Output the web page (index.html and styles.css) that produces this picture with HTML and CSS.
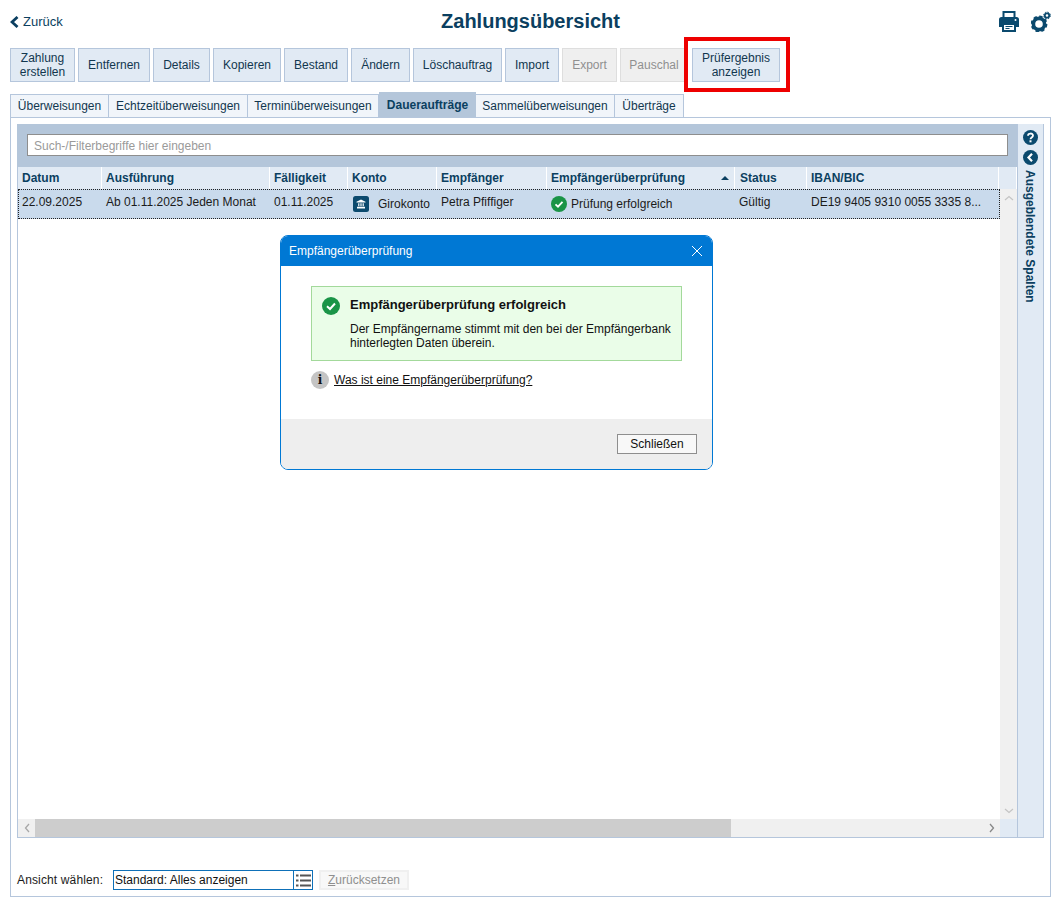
FILE: index.html
```html
<!DOCTYPE html>
<html lang="de">
<head>
  <meta charset="UTF-8" />
  <title>Zahlungsübersicht</title>
  <link rel="stylesheet" href="styles.css">
</head>
<body>

  <!-- Kopfzeile -->
  <header class="top">
    <a class="back" href="#">
      <svg width="9" height="12" viewBox="0 0 9 12"><path d="M7.500 1 2 6 7.500 11" fill="none" stroke="#0b3f60" stroke-width="2.800"/></svg>
      Zurück
    </a>
    <h1>Zahlungsübersicht</h1>
    <div class="top-icons">
      <svg width="20" height="21" viewBox="0 0 20 21">
        <path d="M4.500 1h11v6h-11z" fill="#fff" stroke="#0b4a6e" stroke-width="2"/>
        <path d="M2.500 6h15A2.500 2.500 0 0 1 20 8.500V16h-3v-3H3v3H0V8.500A2.500 2.500 0 0 1 2.500 6z" fill="#0b4a6e"/>
        <path d="M4 13h12v7H4z" fill="#fff" stroke="#0b4a6e" stroke-width="2"/>
        <path d="M6.500 15.500h7M6.500 17.500h4" stroke="#0b4a6e" stroke-width="1"/>
        <circle cx="16.500" cy="9" r="1" fill="#fff"/>
      </svg>
      <svg width="20" height="21" viewBox="0 0 20 21">
        <circle cx="8" cy="13" r="5.600" fill="none" stroke="#0b4a6e" stroke-width="3.600"/>
        <circle cx="8" cy="13" r="7.200" fill="none" stroke="#0b4a6e" stroke-width="2.400" stroke-dasharray="3.300 2.350"/>
        <circle cx="16" cy="4.500" r="2.200" fill="none" stroke="#0b4a6e" stroke-width="1.800"/>
        <circle cx="16" cy="4.500" r="3.400" fill="none" stroke="#0b4a6e" stroke-width="1" stroke-dasharray="1.500 1.170"/>
      </svg>
    </div>
  </header>

  <!-- Aktionen -->
  <div class="toolbar">
    <button class="w65">Zahlung<br>erstellen</button>
    <button class="w72">Entfernen</button>
    <button class="w57">Details</button>
    <button class="w68">Kopieren</button>
    <button class="w64">Bestand</button>
    <button class="w59">Ändern</button>
    <button class="w89">Löschauftrag</button>
    <button class="w54">Import</button>
    <button class="w55" disabled>Export</button>
    <button class="w68" disabled>Pauschal</button>
    <button class="w88">Prüfergebnis<br>anzeigen</button>
    <div class="highlight"></div>
  </div>

  <!-- Tabs -->
  <nav class="tabs">
    <a class="tab w99">Überweisungen</a>
    <a class="tab w139">Echtzeitüberweisungen</a>
    <a class="tab w131">Terminüberweisungen</a>
    <a class="tab w97 active">Daueraufträge</a>
    <a class="tab w139">Sammelüberweisungen</a>
    <a class="tab w69">Überträge</a>
  </nav>

  <div class="frame">
    <div class="panel">
      <div class="grid">
        <div class="search">
          <input type="text" placeholder="Such-/Filterbegriffe hier eingeben" />
        </div>

        <div class="cols head">
          <div>Datum</div>
          <div>Ausführung</div>
          <div>Fälligkeit</div>
          <div>Konto</div>
          <div>Empfänger</div>
          <div class="sorted">Empfängerüberprüfung <span class="sort-arrow"></span></div>
          <div class="status">Status</div>
          <div>IBAN/BIC</div>
          <div></div>
        </div>

        <div class="body">
          <div class="rows">
            <div class="cols row">
              <div>22.09.2025</div>
              <div>Ab 01.11.2025 Jeden Monat</div>
              <div>01.11.2025</div>
              <div class="with-icon konto">
                <svg width="16" height="16" viewBox="0 0 16 16">
                  <rect width="16" height="16" rx="2.500" fill="#0b4a6e"/>
                  <path d="M8 3.500 12.500 5.700V6.600H3.500V5.700z M4 10.800h8v1.600H4z" fill="#fff"/>
                  <path d="M5.200 7.200h1.200v3H5.200z M7.400 7.200h1.200v3H7.400z M9.600 7.200h1.200v3H9.600z" fill="#fff"/>
                </svg>
                <span class="giro">Girokonto</span>
              </div>
              <div>Petra Pfiffiger</div>
              <div class="with-icon">
                <svg width="16" height="16" viewBox="0 0 16 16">
                  <circle cx="8" cy="8" r="8" fill="#1a9447"/>
                  <path d="M4.500 8.300 7 10.700 11.500 5.800" fill="none" stroke="#fff" stroke-width="1.800"/>
                </svg>
                <span>Prüfung erfolgreich</span>
              </div>
              <div>Gültig</div>
              <div>DE19 9405 9310 0055 3335 8...</div>
            </div>
          </div>
          <div class="vbar">
            <svg width="10" height="6" viewBox="0 0 10 6"><path d="M1 5 5 1.500 9 5" fill="none" stroke="#c4c4c4" stroke-width="1.200"/></svg>
            <svg width="10" height="6" viewBox="0 0 10 6"><path d="M1 1 5 4.500 9 1" fill="none" stroke="#c4c4c4" stroke-width="1.200"/></svg>
          </div>
        </div>

        <div class="hbar">
          <div class="hbar-btn">
            <svg width="6" height="10" viewBox="0 0 6 10"><path d="M5 1 1.500 5 5 9" fill="none" stroke="#a8a8a8" stroke-width="1.300"/></svg>
          </div>
          <div class="hbar-thumb"></div>
          <div class="hbar-track">
            <svg width="6" height="10" viewBox="0 0 6 10"><path d="M1 1 4.500 5 1 9" fill="none" stroke="#888" stroke-width="1.300"/></svg>
          </div>
          <div class="hbar-corner"></div>
        </div>
      </div>

      <aside class="side">
        <svg width="15" height="15" viewBox="0 0 15 15">
          <circle cx="7.500" cy="7.500" r="7.500" fill="#0b4a6e"/>
          <path d="M5 5.800C5 2.800 10 2.800 10 5.600 10 7.500 7.500 7.500 7.500 9.200" fill="none" stroke="#fff" stroke-width="1.800"/>
          <rect x="6.500" y="10.300" width="2" height="2" fill="#fff"/>
        </svg>
        <svg width="15" height="15" viewBox="0 0 15 15">
          <circle cx="7.500" cy="7.500" r="7.500" fill="#0b4a6e"/>
          <path d="M9 3.800 5.500 7.500 9 11.200" fill="none" stroke="#fff" stroke-width="2.200"/>
        </svg>
        <span class="side-label">Ausgeblendete Spalten</span>
      </aside>
    </div>

    <div class="view-bar">
      <label>Ansicht wählen:</label>
      <div class="combo">
        <span>Standard: Alles anzeigen</span>
        <div class="combo-btn">
          <svg width="15" height="15" viewBox="0 0 15 15" fill="#555">
            <rect x="0" y="1.500" width="2.500" height="2"/><rect x="4" y="1.500" width="11" height="2"/>
            <rect x="0" y="6.500" width="2.500" height="2"/><rect x="4" y="6.500" width="11" height="2"/>
            <rect x="0" y="11.500" width="2.500" height="2"/><rect x="4" y="11.500" width="11" height="2"/>
          </svg>
        </div>
      </div>
      <button class="reset" disabled><u>Z</u>urücksetzen</button>
    </div>
  </div>

  <!-- Dialog Empfängerüberprüfung -->
  <div class="dialog">
    <div class="dialog-head">
      <span>Empfängerüberprüfung</span>
      <svg width="12" height="12" viewBox="0 0 12 12"><path d="M1 1 11 11M11 1 1 11" stroke="#fff" stroke-width="1"/></svg>
    </div>
    <div class="dialog-body">
      <div class="notice">
        <svg width="18" height="18" viewBox="0 0 18 18">
          <circle cx="9" cy="9" r="9" fill="#1a9447"/>
          <path d="M5 9.300 8 12 13 6.500" fill="none" stroke="#fff" stroke-width="2"/>
        </svg>
        <div>
          <h3>Empfängerüberprüfung erfolgreich</h3>
          <p>Der Empfängername stimmt mit den bei der Empfängerbank hinterlegten Daten überein.</p>
        </div>
      </div>
      <div class="info-line">
        <span class="info-icon">i</span>
        <a href="#">Was ist eine Empfängerüberprüfung?</a>
      </div>
    </div>
    <div class="dialog-foot">
      <button>Schließen</button>
    </div>
  </div>

</body>
</html>
```

FILE: styles.css
```css
* {
  box-sizing: border-box;
}

body {
  margin: 0;
  width: 1056px;
  height: 902px;
  padding: 0 5px 5px 10px;
  position: relative;
  overflow: hidden;
  background: #fff;
  font-family: "Liberation Sans", Arial, sans-serif;
  font-size: 12px;
  color: #1b1b1b;
}

/* Kopfzeile */
.top {
  display: grid;
  grid-template-columns: 1fr auto 1fr;
  align-items: center;
  height: 43px;
}
.back {
  display: flex;
  align-items: center;
  gap: 4px;
  color: #0b3f60;
  text-decoration: none;
  font-size: 13px;
}
.top h1 {
  margin: 0;
  font-size: 20px;
  font-weight: bold;
  color: #0b3f60;
}
.top-icons {
  display: flex;
  justify-content: flex-end;
  gap: 12px;
}

/* Aktionen */
.toolbar {
  display: flex;
  gap: 3px;
  margin-top: 5px;
  height: 34px;
  position: relative;
}
.toolbar button {
  height: 34px;
  padding: 0;
  border: 1px solid #b5c6dc;
  background: #e1eaf4;
  color: #12374f;
  font-family: inherit;
  font-size: 12px;
  line-height: 14px;
}
.toolbar button:disabled {
  border-color: #dedede;
  background: #efefef;
  color: #8f8f8f;
}
.w54 { width: 54px; }
.w55 { width: 55px; }
.w57 { width: 57px; }
.w59 { width: 59px; }
.w64 { width: 64px; }
.w65 { width: 65px; }
.w68 { width: 68px; }
.w69 { width: 69px; }
.w72 { width: 72px; }
.w88 { width: 88px; }
.w89 { width: 89px; }
.w97 { width: 97px; }
.w99 { width: 99px; }
.w131 { width: 131px; }
.w139 { width: 139px; }
.toolbar .w88 { margin-left: 1px; }
.highlight {
  position: absolute;
  left: 674px;
  top: -11px;
  width: 106px;
  height: 55px;
  border: 4px solid #ee0000;
}

/* Tabs */
.tabs {
  display: flex;
  align-items: flex-end;
  height: 25px;
  margin-top: 10px;
}
.tab {
  display: flex;
  align-items: center;
  justify-content: center;
  height: 23px;
  border: 1px solid #b5c6dc;
  border-left-width: 0;
  border-bottom: 0;
  background: #f1f5fa;
  color: #12374f;
  white-space: nowrap;
}
.tab:first-child {
  border-left-width: 1px;
}
.tab.active {
  height: 25px;
  border: 0;
  background: #b4c6da;
  color: #0b3f60;
  font-weight: bold;
}

.frame {
  width: 1041px;
  height: 780px;
  border: 1px solid #b5c6dc;
  padding: 6px 6px 0 6px;
}

.panel {
  display: flex;
  height: 714px;
}
.grid {
  width: 1000px;
  display: flex;
  flex-direction: column;
  border-left: 1px solid #b5c6dc;
  border-bottom: 1px solid #b5c6dc;
}

.search {
  height: 43px;
  padding: 10px 9px 0 10px;
  background: #b4c6da;
  margin-left: -1px;
}
.search input {
  display: block;
  width: 100%;
  height: 22px;
  padding: 1px 6px 0;
  border: 1px solid #8e8e8e;
  outline: none;
  font-family: inherit;
  font-size: 12px;
}
.search input::placeholder {
  color: #9a9a9a;
}

.cols {
  display: grid;
  grid-template-columns: 84px 168px 78px 89px 110px 188px 72px 192px 18px;
}
.head {
  height: 22px;
  background: #fff;
  font-weight: bold;
  color: #0b3f60;
}
.head > div {
  padding: 4px 4px 0;
  background: #e1eaf4;
  border-right: 1px solid #fff;
}
.head > .status {
  padding-left: 5px;
}
.sorted {
  position: relative;
}
.sort-arrow {
  position: absolute;
  right: 5px;
  top: 9px;
  border-left: 4px solid transparent;
  border-right: 4px solid transparent;
  border-bottom: 4px solid #0b3f60;
}

.body {
  flex: 1;
  display: flex;
  min-height: 0;
}
.rows {
  flex: 1;
}
.row {
  height: 30px;
  grid-template-columns: 84px 168px 78px 89px 110px 188px 72px 189px;
  background: #c9daec;
  outline: 1px dotted #222;
  outline-offset: -1px;
}
.row > div {
  padding: 6px 4px 0;
  white-space: nowrap;
  overflow: hidden;
}
.row > .with-icon {
  display: flex;
  align-items: flex-start;
  gap: 4px;
  padding-top: 7px;
}
.row > .konto {
  padding-left: 5px;
}
.with-icon span {
  padding-top: 1px;
}
.with-icon .giro {
  margin-left: 5px;
}

.vbar {
  width: 17px;
  display: flex;
  flex-direction: column;
  align-items: center;
  justify-content: space-between;
  padding: 6px 0 5px;
  background: #f0f0f0;
}

.hbar {
  display: flex;
  height: 18px;
  background: #f0f0f0;
}
.hbar-btn {
  width: 17px;
  display: flex;
  align-items: center;
  justify-content: center;
}
.hbar-thumb {
  width: 696px;
  background: #cdcdcd;
}
.hbar-track {
  flex: 1;
  display: flex;
  align-items: center;
  justify-content: flex-end;
  padding-right: 5px;
}
.hbar-corner {
  width: 17px;
  background: #e1eaf4;
}

.side {
  width: 27px;
  display: flex;
  flex-direction: column;
  align-items: center;
  gap: 5px;
  padding-top: 6px;
  padding-right: 1px;
  background: #e1eaf4;
  border-left: 1px solid #b5c6dc;
  border-right: 1px solid #b5c6dc;
  border-bottom: 1px solid #b5c6dc;
}
.side-label {
  writing-mode: vertical-rl;
  font-weight: bold;
  color: #0b3f60;
}

/* Ansicht */
.view-bar {
  display: flex;
  align-items: center;
  margin-top: 32px;
  height: 20px;
}
.view-bar label {
  width: 96px;
  letter-spacing: 0.14px;
}
.combo {
  display: flex;
  width: 200px;
  height: 20px;
  border: 1px solid #0e70b8;
}
.combo span {
  flex: 1;
  padding: 2px 1px 0;
  color: #111;
}
.combo-btn {
  width: 19px;
  display: flex;
  align-items: center;
  justify-content: center;
  border-left: 1px solid #0e70b8;
}
.reset {
  width: 90px;
  height: 20px;
  margin-left: 6px;
  padding: 0;
  border: 2px solid #f0f0f0;
  background: #f8f8f8;
  color: #8f8f8f;
  font-family: inherit;
  font-size: 12px;
}

/* Dialog */
.dialog {
  position: absolute;
  left: 280px;
  top: 235px;
  width: 433px;
  height: 235px;
  display: flex;
  flex-direction: column;
  background: #fff;
  border: 1px solid #0078d4;
  border-radius: 8px;
  overflow: hidden;
}
.dialog-head {
  display: flex;
  align-items: center;
  justify-content: space-between;
  height: 30px;
  padding: 0 9px 0 8px;
  background: #0078d4;
  color: #fff;
}
.dialog-body {
  flex: 1;
  padding: 20px 30px 0;
}
.notice {
  display: flex;
  gap: 10px;
  width: 371px;
  height: 75px;
  padding: 10px 10px 0;
  background: #eafde8;
  border: 1px solid #a3d99b;
}
.notice svg {
  flex-shrink: 0;
}
.notice h3 {
  margin: 0 0 10px;
  font-size: 13px;
  color: #111;
}
.notice p {
  margin: 0;
  line-height: 14px;
  color: #111;
}
.info-line {
  display: flex;
  align-items: center;
  gap: 5px;
  margin-top: 10px;
}
.info-line a {
  color: #111;
}
.info-icon {
  width: 18px;
  height: 18px;
  border-radius: 50%;
  background: #c4c4c4;
  color: #111;
  font-family: "DejaVu Serif", serif;
  font-weight: bold;
  font-size: 12px;
  line-height: 18px;
  text-align: center;
}
.dialog-foot {
  height: 50px;
  display: flex;
  justify-content: flex-end;
  padding: 15px 15px 0 0;
  background: #eeeeee;
}
.dialog-foot button {
  width: 80px;
  height: 20px;
  padding: 0;
  border: 1px solid #8e8e8e;
  background: #f8f8f8;
  color: #111;
  font-family: inherit;
  font-size: 12px;
}
```
